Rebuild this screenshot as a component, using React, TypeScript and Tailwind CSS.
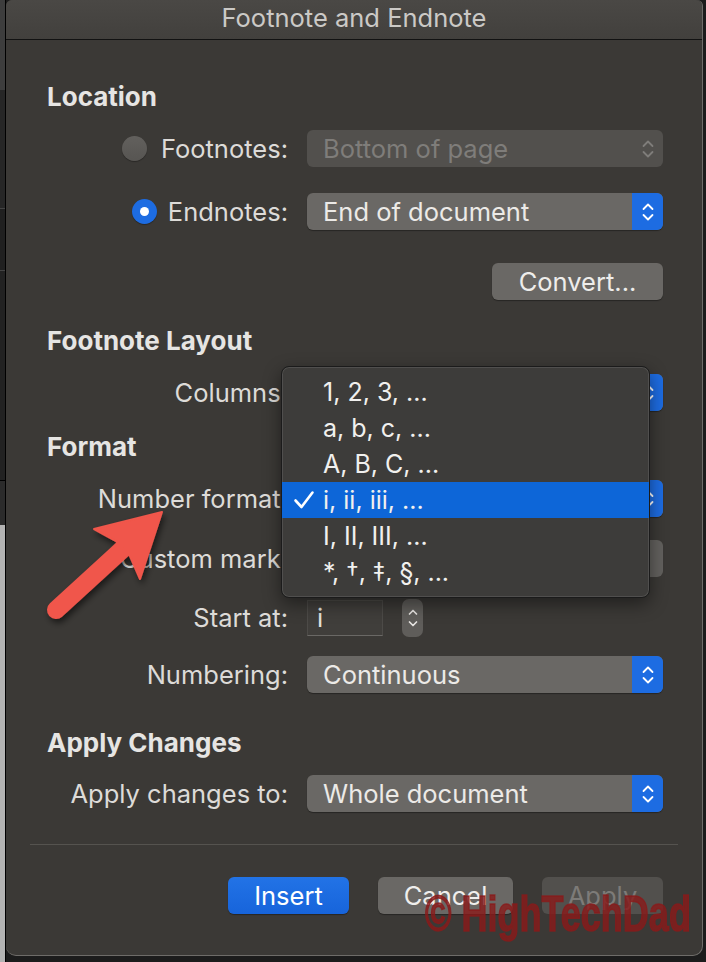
import React from "react";

function Chev({ color = "#ffffff" }: { color?: string }) {
  return (
    <svg width="14" height="26" viewBox="0 0 14 26" fill="none">
      <path d="M2.5 10 L7 5.5 L11.5 10" stroke={color} strokeWidth="1.8" strokeLinecap="round" strokeLinejoin="round" />
      <path d="M2.5 16 L7 20.5 L11.5 16" stroke={color} strokeWidth="1.8" strokeLinecap="round" strokeLinejoin="round" />
    </svg>
  );
}

function Popup({ text, disabled = false }: { text: string; disabled?: boolean }) {
  if (disabled) {
    return (
      <div className="flex h-[37px] w-[356px] items-center rounded-[6px] bg-[#52504d]">
        <span className="pl-[16px] text-[25.5px] leading-none text-[#7f7d7a]">{text}</span>
        <div className="ml-auto flex h-full w-[31px] items-center justify-center">
          <Chev color="#7f7d7a" />
        </div>
      </div>
    );
  }
  return (
    <div className="flex h-[37px] w-[356px] items-center rounded-[6px] bg-[#6a6865] shadow-[0_1px_1px_rgba(0,0,0,0.35)]">
      <span className="pl-[16px] text-[25.5px] leading-none text-[#eceae7]">{text}</span>
      <div className="ml-auto flex h-full w-[31px] items-center justify-center rounded-r-[6px] bg-[#1d6ce2]">
        <Chev />
      </div>
    </div>
  );
}

function Row({ label, children, mt }: { label: React.ReactNode; children: React.ReactNode; mt: string }) {
  return (
    <div className={`flex h-[37px] items-center ${mt}`}>
      <div className="flex w-[282px] items-center justify-end text-[25.5px] leading-none text-[#dddbd8]">{label}</div>
      <div className="ml-[19px]">{children}</div>
    </div>
  );
}

function Header({ children, mt }: { children: React.ReactNode; mt: string }) {
  return (
    <div className={`${mt} h-[30px] pl-[41px] text-[26px] font-bold leading-[30px] text-[#e6e5e3]`}>{children}</div>
  );
}

const items = ["1, 2, 3, ...", "a, b, c, ...", "A, B, C, ...", "i, ii, iii, ...", "I, II, III, ...", "*, †, ‡, §, ..."];

export default function App() {
  return (
    <div className="relative flex h-[962px] w-[706px] overflow-hidden bg-[#1c1c1c] font-['Inter','Liberation_Sans',sans-serif]">
      {/* left background strip */}
      <div className="flex w-[5px] flex-col">
        <div className="h-[90px] bg-[#3d3d3d]" />
        <div className="h-[118px] bg-[#262626]" />
        <div className="h-[62px] border-t border-[#444] bg-[#202020]" />
        <div className="h-[210px] border-t border-[#444] bg-[#222222]" />
        <div className="h-[45px] border-t border-black bg-[#2b2b2b]" />
        <div className="flex-1 bg-[#b3b3b3]" />
      </div>
      <div className="w-px bg-black" />

      {/* window */}
      <div className="relative flex h-[956px] w-[697px] flex-col rounded-b-[10px] rounded-t-[6px] border-b border-r border-[#6e6c69] bg-[#3b3936]">
        {/* title bar */}
        <div className="flex h-[40px] items-center justify-center rounded-t-[6px] border-b border-[#121212] bg-gradient-to-b from-[#4a4845] to-[#42403d]">
          <span className="-mt-[3px] text-[25.5px] leading-none text-[#cbc9c6]">Footnote and Endnote</span>
        </div>

        <Header mt="mt-[42px]">Location</Header>

        <Row
          mt="mt-[18px]"
          label={
            <span className="flex items-center gap-[14px]">
              <span className="h-[25px] w-[25px] rounded-full bg-gradient-to-b from-[#62605d] to-[#575552] shadow-[0_1px_1px_rgba(0,0,0,0.3)]" />
              <span>Footnotes:</span>
            </span>
          }
        >
          <Popup text="Bottom of page" disabled />
        </Row>

        <Row
          mt="mt-[26px]"
          label={
            <span className="flex items-center gap-[11px]">
              <span className="flex h-[25px] w-[25px] items-center justify-center rounded-full bg-[#1d6ce2] shadow-[0_1px_1px_rgba(0,0,0,0.3)]">
                <span className="h-[9px] w-[9px] rounded-full bg-white" />
              </span>
              <span>Endnotes:</span>
            </span>
          }
        >
          <Popup text="End of document" />
        </Row>

        <div className="mt-[33px] flex justify-end pr-[39px]">
          <div className="flex h-[37px] w-[171px] items-center justify-center rounded-[6px] bg-[#6a6865] text-[25.5px] leading-none text-[#eeedeb] shadow-[0_1px_1px_rgba(0,0,0,0.35)]">
            Convert...
          </div>
        </div>

        <Header mt="mt-[26px]">Footnote Layout</Header>

        <Row mt="mt-[18px]" label="Columns:">
          <Popup text="1" />
        </Row>

        <Header mt="mt-[21px]">Format</Header>

        <Row mt="mt-[18px]" label="Number format:">
          <Popup text="i, ii, iii, ..." />
        </Row>

        <Row mt="mt-[23px]" label="Custom mark:">
          <div className="h-[37px] w-[356px] rounded-[6px] bg-[#63615e]" />
        </Row>

        <Row mt="mt-[22px]" label="Start at:">
          <div className="flex items-center">
            <div className="flex h-[36px] w-[76px] items-center border border-[#4d4b48] border-b-[#6a6865] bg-[#403e3b] pl-[9px] text-[25.5px] leading-none text-[#e4e2df]">
              i
            </div>
            <div className="ml-[19px] flex h-[38px] w-[21px] flex-col items-center justify-center rounded-[7px] bg-[#5f5d5a]">
              <svg width="12" height="26" viewBox="0 0 12 26" fill="none">
                <path d="M2.5 9 L6 5.5 L9.5 9" stroke="#e6e4e1" strokeWidth="1.7" strokeLinecap="round" strokeLinejoin="round" />
                <path d="M2.5 17 L6 20.5 L9.5 17" stroke="#e6e4e1" strokeWidth="1.7" strokeLinecap="round" strokeLinejoin="round" />
              </svg>
            </div>
          </div>
        </Row>

        <Row mt="mt-[20px]" label="Numbering:">
          <Popup text="Continuous" />
        </Row>

        <Header mt="mt-[35px]">Apply Changes</Header>

        <Row mt="mt-[17px]" label="Apply changes to:">
          <Popup text="Whole document" />
        </Row>

        <div className="mx-[24px] mt-[32px] h-px bg-[#55534f]" />

        <div className="mt-[32px] flex justify-end gap-[29px] pr-[39px]">
          <div className="flex h-[37px] w-[121px] items-center justify-center rounded-[6px] bg-gradient-to-b from-[#2273e6] to-[#1764db] text-[25.5px] leading-none text-white shadow-[0_1px_1px_rgba(0,0,0,0.35)]">
            Insert
          </div>
          <div className="flex h-[37px] w-[135px] items-center justify-center rounded-[6px] bg-[#6a6865] text-[25.5px] leading-none text-[#efeeec] shadow-[0_1px_1px_rgba(0,0,0,0.35)]">
            Cancel
          </div>
          <div className="flex h-[37px] w-[121px] items-center justify-center rounded-[6px] bg-[#52504d] text-[25.5px] leading-none text-[#7d7b78]">
            Apply
          </div>
        </div>

        {/* dropdown menu overlay */}
        <div className="absolute left-[275px] top-[366px] w-[369px] rounded-[8px] border border-[#1b1b1b] bg-[#3d3c3a] py-[7px] shadow-[0_6px_18px_rgba(0,0,0,0.45),inset_0_0_0_1px_rgba(255,255,255,0.1)]">
          {items.map((t, i) => (
            <div key={t} className={`flex h-[36px] items-center ${i === 3 ? "bg-[#0d66d8]" : ""}`}>
              <div className="flex w-[41px] items-center justify-center pl-[3px]">
                {i === 3 && (
                  <svg width="22" height="20" viewBox="0 0 22 20" fill="none">
                    <path d="M2.5 10.5 L8.5 17 L19.5 2.5" stroke="white" strokeWidth="2.6" strokeLinecap="round" strokeLinejoin="round" />
                  </svg>
                )}
              </div>
              <span className="text-[25px] leading-none text-[#f1f0ee]">{t}</span>
            </div>
          ))}
        </div>

        {/* watermark */}
        <div className="pointer-events-none absolute left-[419px] top-[889px] origin-left scale-x-[0.72] whitespace-nowrap font-['Liberation_Sans',sans-serif] text-[50px] font-bold leading-none text-[#8a1a1a]/80 [-webkit-text-stroke:1.5px_rgba(138,26,26,0.8)]">
          © HighTechDad
        </div>
      </div>

      {/* red arrow annotation */}
      <svg className="pointer-events-none absolute left-0 top-0" width="706" height="962" viewBox="0 0 706 962">
        <defs>
          <filter id="sh" x="-20%" y="-20%" width="140%" height="140%">
            <feDropShadow dx="2" dy="4" stdDeviation="3" floodColor="#000" floodOpacity="0.55" />
          </filter>
        </defs>
        <g filter="url(#sh)" fill="#f0564b" stroke="#f0564b">
          <line x1="56" y1="610" x2="126" y2="546" strokeWidth="18" strokeLinecap="round" />
          <polygon points="162,512 94,529 116,541 130,556 140,579" strokeWidth="2" strokeLinejoin="round" />
        </g>
      </svg>
    </div>
  );
}
